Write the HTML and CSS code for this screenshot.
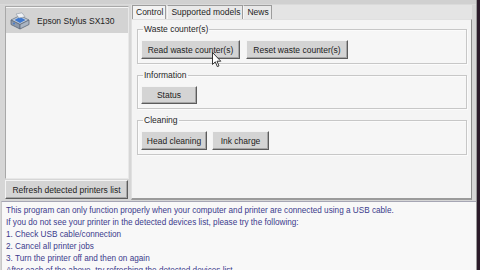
FILE: index.html
```html
<!DOCTYPE html>
<html lang="en">

<head>
    <meta charset="UTF-8" />
    <title>Epson printer utility</title>
    <link rel="stylesheet" href="styles.css">
</head>

<body>
    <div class="window">
        <div class="titlebar"></div>

        <div class="main">
            <div class="side">
                <div class="devices">
                    <div class="device selected">
                        <svg class="printer-icon" width="24" height="18" viewBox="0 0 24 18">
                            <path d="M3 8 L12 3.5 L21 8 L12 12.5 Z" fill="#c3ccd6" stroke="#6b7786" stroke-width="0.8" />
                            <path d="M3 8 L3 12.5 L12 17 L12 12.5 Z" fill="#8d99aa" stroke="#5d6878" stroke-width="0.8" />
                            <path d="M21 8 L21 12.5 L12 17 L12 12.5 Z" fill="#a9b4c2" stroke="#5d6878" stroke-width="0.8" />
                            <path d="M6.5 8 L12 5 L17.5 8 L12 11 Z" fill="#3d78d0" />
                            <path d="M8 2 L14 0.8 L17 4.8 L11 6 Z" fill="#eef1f5" stroke="#8d97a3" stroke-width="0.6" />
                            <circle cx="6" cy="11.5" r="0.9" fill="#3d78d0" />
                        </svg>
                        <span>Epson Stylus SX130</span>
                    </div>
                </div>
                <button class="btn refresh">Refresh detected printers list</button>
            </div>

            <div class="tabs">
                <div class="tab-strip">
                    <span class="tab active">Control</span>
                    <span class="tab">Supported models</span>
                    <span class="tab">News</span>
                </div>
                <div class="tab-panel">
                    <fieldset class="group">
                        <legend>Waste counter(s)</legend>
                        <div class="group-row">
                            <button class="btn read">Read waste counter(s)</button>
                            <button class="btn reset">Reset waste counter(s)</button>
                        </div>
                    </fieldset>
                    <fieldset class="group">
                        <legend>Information</legend>
                        <div class="group-row">
                            <button class="btn status">Status</button>
                        </div>
                    </fieldset>
                    <fieldset class="group">
                        <legend>Cleaning</legend>
                        <div class="group-row">
                            <button class="btn head">Head cleaning</button>
                            <button class="btn ink">Ink charge</button>
                        </div>
                    </fieldset>
                </div>
            </div>
        </div>

        <div class="notes">
            <p>This program can only function properly when your computer and printer are connected using a USB cable.</p>
            <p>If you do not see your printer in the detected devices list, please try the following:</p>
            <p>1. Check USB cable/connection</p>
            <p>2. Cancel all printer jobs</p>
            <p>3. Turn the printer off and then on again</p>
            <p>After each of the above, try refreshing the detected devices list.</p>
        </div>

        <!-- mouse pointer over the read button -->
        <svg class="cursor" width="10" height="16" viewBox="0 0 10 16">
            <path d="M0.5 0.5 L0.5 12.5 L3.3 9.8 L5.3 14.6 L7 13.9 L5 9.2 L8.8 9.2 Z" fill="#fff" stroke="#222" stroke-width="0.9" />
        </svg>
    </div>
</body>

</html>
```

FILE: styles.css
```css
body {
    margin: 0;
    background: #2b1b2a;
    font-family: 'Liberation Sans', Arial, sans-serif;
    font-size: 8.5px;
    color: #222;
}

.window {
    position: relative;
    width: 476px;
    height: 270px;
    background: #d6d6d6;
    border-right: 1px solid #9a9a9a;
    display: flex;
    flex-direction: column;
    overflow: hidden;
}

.titlebar {
    flex: none;
    height: 5px;
    background: #d0d0d0;
    border-bottom: 1px solid #dadada;
    box-sizing: border-box;
}

.main {
    flex: none;
    display: flex;
    height: 195px;
    padding-left: 5px;
}

.side {
    width: 124px;
    display: flex;
    flex-direction: column;
    gap: 1px;
    padding-top: 1px;
}

.devices {
    flex: 1;
    background: #f6f6f6;
    border: 1px solid #a8a8a8;
    border-right-color: #e8e8e8;
    border-bottom-color: #e8e8e8;
}

.device {
    display: flex;
    align-items: center;
    gap: 5px;
    height: 25px;
    padding-left: 2px;
    margin-top: 1px;
    color: #1e1e1e;
}

.device.selected {
    background: #d3d3d3;
}

.printer-icon {
    flex: none;
}

.btn {
    font-family: 'Liberation Sans', Arial, sans-serif;
    font-size: 8.5px;
    color: #1c1c1c;
    background: #d4d4d4;
    border: 1px solid #f4f4f4;
    border-right-color: #5c5c5c;
    border-bottom-color: #5c5c5c;
    box-shadow: inset -1px -1px 0 #a6a6a6;
    padding: 0;
    height: 19px;
}

.refresh {
    width: 123px;
    margin-bottom: 1px;
}

.tabs {
    width: 341px;
    margin-left: 2px;
    display: flex;
    flex-direction: column;
}

.tab-strip {
    display: flex;
    height: 14px;
    padding-left: 1px;
    background: #e4e4e4;
}

.tab {
    line-height: 13px;
    padding: 0 2px 0 3px;
    border: 1px solid #9c9c9c;
    border-bottom: none;
    border-left-color: #f6f6f6;
    background: #e9e9e9;
    color: #1e1e1e;
}

.tab.active {
    background: #f3f3f3;
    border-left-color: #9c9c9c;
    margin-right: 1px;
}

.tab-panel {
    flex: 1;
    background: #f4f4f4;
    border: 1px solid #e0e0e0;
    border-right-color: #8e8e8e;
    border-bottom: 2px solid #9a9a9a;
    padding: 4px 4px 0 5px;
}

.group {
    margin: 0 0 6px;
    padding: 0 3px 4px;
    border: 1px solid #c7c7c7;
    box-shadow: 1px 1px 0 #fbfbfb, inset 1px 1px 0 #fbfbfb;
    background: #f6f6f6;
}

.group legend {
    padding: 0 1px;
    margin-left: 2px;
    line-height: 10px;
    color: #262626;
}

.group-row {
    display: flex;
    gap: 6px;
    padding-top: 6px;
}

.read {
    width: 99px;
}

.reset {
    width: 102px;
}

.status {
    width: 56px;
    height: 18px;
}

.head {
    width: 66px;
}

.ink {
    width: 57px;
    margin-left: -1px;
}

.notes {
    flex: 1;
    background: #f8f8f8;
    border-top: 1px solid #a6a6b4;
    border-left: 1px solid #c8c8c8;
    margin-left: 1px;
    margin-top: 1px;
    padding: 3px 0 0 4px;
    color: #3b3b8c;
    font-size: 8.2px;
}

.notes p {
    margin: 0;
    line-height: 12px;
    white-space: nowrap;
}

.cursor {
    position: absolute;
    left: 212px;
    top: 52px;
}
```
